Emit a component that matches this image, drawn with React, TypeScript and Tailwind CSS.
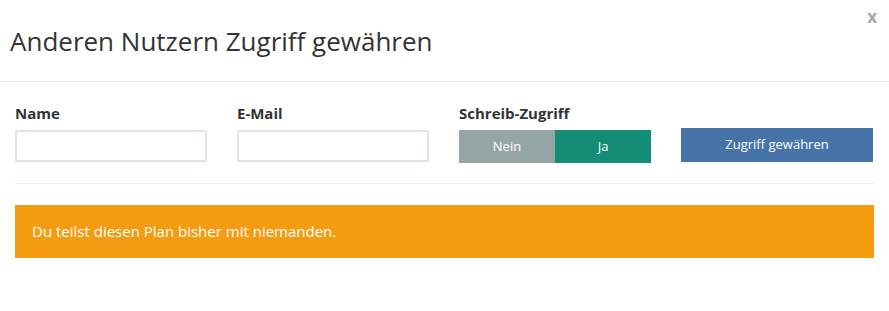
import { useState } from 'react';

export default function App() {
  const [write, setWrite] = useState(true);

  return (
    <div className="relative w-[889px] h-[311px] bg-white text-[#333] font-['Open_Sans',sans-serif]">
      <button className="absolute right-[12px] top-[8px] text-[17px] font-bold leading-none text-[#a8a8a8]">
        x
      </button>

      <div className="h-[82px] border-b border-[#e5e5e5] px-[10px] pt-[23px]">
        <h2 className="text-[26px] leading-[36px] text-[#333]">Anderen Nutzern Zugriff gewähren</h2>
      </div>

      <div className="px-[15px] pt-[22px]">
        <div className="flex gap-[30px]">
          <div className="w-[192px]">
            <label className="block text-[15px] font-bold leading-[18px] text-[#333]">Name</label>
            <input className="mt-[8px] block h-[32px] w-full border-2 border-[#dde6ee] outline-none px-2 text-[14px]" />
          </div>
          <div className="w-[192px]">
            <label className="block text-[15px] font-bold leading-[18px] text-[#333]">E-Mail</label>
            <input className="mt-[8px] block h-[32px] w-full border-2 border-[#dde6ee] outline-none px-2 text-[14px]" />
          </div>
          <div className="w-[192px]">
            <label className="block text-[15px] font-bold leading-[18px] text-[#333]">Schreib-Zugriff</label>
            <div className="mt-[8px] flex h-[33px]">
              <button
                onClick={() => setWrite(false)}
                className={`flex-1 text-[13px] text-white ${write ? 'bg-[#95a5a6]' : 'bg-[#138d75]'}`}
              >
                Nein
              </button>
              <button
                onClick={() => setWrite(true)}
                className={`flex-1 text-[13px] text-white ${write ? 'bg-[#138d75]' : 'bg-[#95a5a6]'}`}
              >
                Ja
              </button>
            </div>
          </div>
          <div className="w-[192px] pt-[24px]">
            <button className="h-[34px] w-full bg-[#4673a8] text-[13px] text-white">Zugriff gewähren</button>
          </div>
        </div>

        <div className="mt-[20px] border-t border-[#eeeeee]" />

        <div className="mt-[21px] h-[53px] bg-[#f39c12] px-[17px] flex items-center text-[15px] text-white">
          Du teilst diesen Plan bisher mit niemanden.
        </div>
      </div>
    </div>
  );
}
